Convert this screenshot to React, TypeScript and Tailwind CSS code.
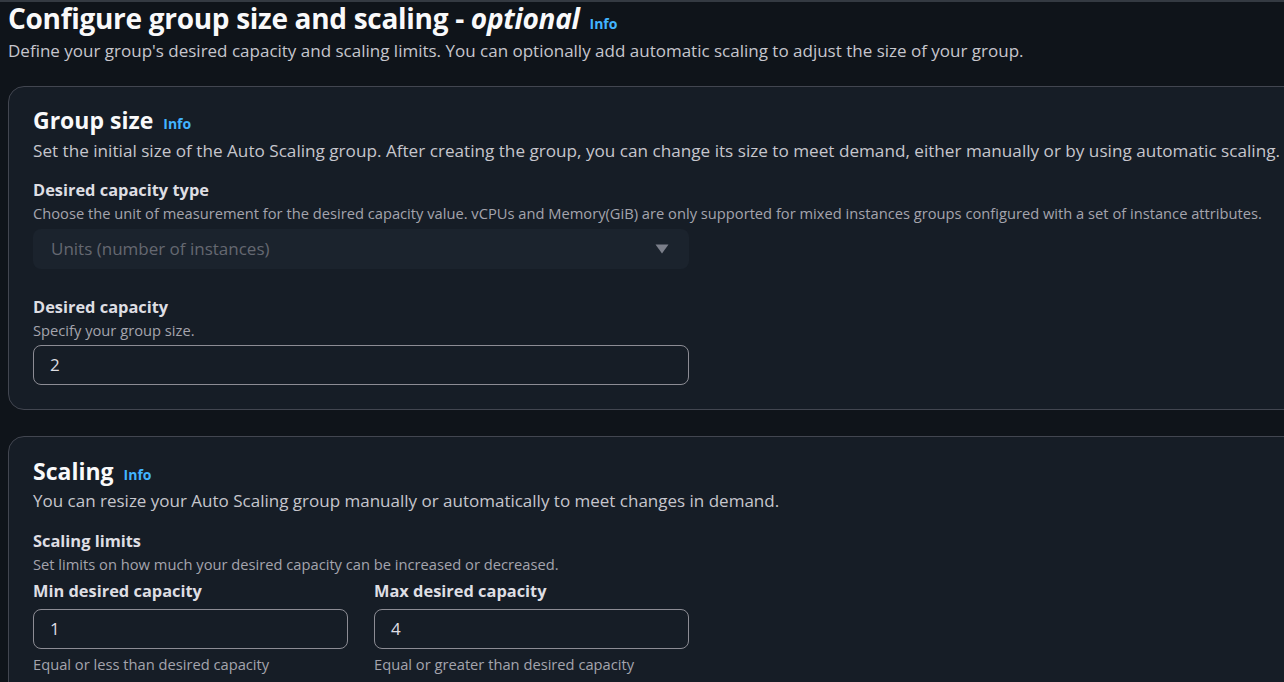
import React from 'react';

const font = { fontFamily: '"Open Sans", "Noto Sans", Arial, sans-serif' };

function InfoLink() {
	return <a href="#" className="text-[14px] font-bold text-[#42b4ff]">Info</a>;
}

function Label({ children }: { children: React.ReactNode }) {
	return <span className="text-[16.4px] font-bold leading-[24px] text-[#dedee3]">{children}</span>;
}

function Hint({ children, className = '' }: { children: React.ReactNode; className?: string }) {
	return <span className={`text-[14.7px] leading-[22px] text-[#a4a4ad] ${className}`}>{children}</span>;
}

function TextInput({ value }: { value: string }) {
	return (
		<div className="flex h-[40px] w-full items-center rounded-[8px] border border-[#8c8c94] px-[16px] text-[17px] text-[#dedee3]">
			{value}
		</div>
	);
}

function CardHeader({ title }: { title: string }) {
	return (
		<div className="flex items-baseline gap-[10px]">
			<h2 className="text-[23px] font-bold leading-[30px] text-[#f9f9fa]">{title}</h2>
			<InfoLink />
		</div>
	);
}

export default function App() {
	return (
		<div style={font} className="min-h-screen w-full overflow-hidden border-t-2 border-[#343a42] bg-[#0f141a]">
			<div className="px-[8px]">
				<div className="flex items-baseline gap-[10px]">
					<h1 className="text-[28px] font-bold leading-[32px] tracking-[-0.3px] text-[#f9f9fa]">
						Configure group size and scaling - <i className="font-bold">optional</i>
					</h1>
					<InfoLink />
				</div>
				<p className="mt-[5px] text-[17px] leading-[24px] text-[#c6c6cd]">
					Define your group's desired capacity and scaling limits. You can optionally add automatic scaling to adjust the size of your group.
				</p>
			</div>

			<div className="ml-[8px] mt-[23px] flex w-[1320px] flex-col gap-[26px]">
				<section className="rounded-[16px] border border-[#424650] bg-[#161d26] pb-[24px] pl-[24px] pt-[18px]">
					<CardHeader title="Group size" />
					<p className="mt-[4px] text-[17.15px] leading-[24px] text-[#c6c6cd]">
						Set the initial size of the Auto Scaling group. After creating the group, you can change its size to meet demand, either manually or by using automatic scaling.
					</p>
					<div className="mt-[15px] flex flex-col">
						<Label>Desired capacity type</Label>
						<Hint>
							Choose the unit of measurement for the desired capacity value. vCPUs and Memory(GiB) are only supported for mixed instances groups configured with a set of instance attributes.
						</Hint>
						<div className="mt-[5px] flex h-[40px] w-[656px] items-center justify-between rounded-[8px] bg-[#1b232d] pl-[18px] pr-[20px] text-[17px] text-[#656871]">
							<span>Units (number of instances)</span>
							<svg width="14" height="10" viewBox="0 0 14 10">
								<path d="M0.5 0.5 H13.5 L7 9.5 Z" fill="#7b7f8a" />
							</svg>
						</div>
					</div>
					<div className="mt-[26px] flex flex-col">
						<Label>Desired capacity</Label>
						<Hint>Specify your group size.</Hint>
						<div className="mt-[4px] w-[656px]">
							<TextInput value="2" />
						</div>
					</div>
				</section>

				<section className="rounded-[16px] border border-[#424650] bg-[#161d26] pb-[24px] pl-[24px] pt-[19px]">
					<CardHeader title="Scaling" />
					<p className="mt-[3px] text-[17px] leading-[24px] text-[#c6c6cd]">
						You can resize your Auto Scaling group manually or automatically to meet changes in demand.
					</p>
					<div className="mt-[16px] flex flex-col">
						<Label>Scaling limits</Label>
						<Hint>Set limits on how much your desired capacity can be increased or decreased.</Hint>
						<div className="mt-[4px] grid w-[656px] grid-cols-2 gap-[26px]">
							<div className="flex flex-col">
								<Label>Min desired capacity</Label>
								<div className="mt-[6px]"><TextInput value="1" /></div>
								<Hint className="mt-[4px]">Equal or less than desired capacity</Hint>
							</div>
							<div className="flex flex-col">
								<Label>Max desired capacity</Label>
								<div className="mt-[6px]"><TextInput value="4" /></div>
								<Hint className="mt-[4px]">Equal or greater than desired capacity</Hint>
							</div>
						</div>
					</div>
				</section>
			</div>
		</div>
	);
}
